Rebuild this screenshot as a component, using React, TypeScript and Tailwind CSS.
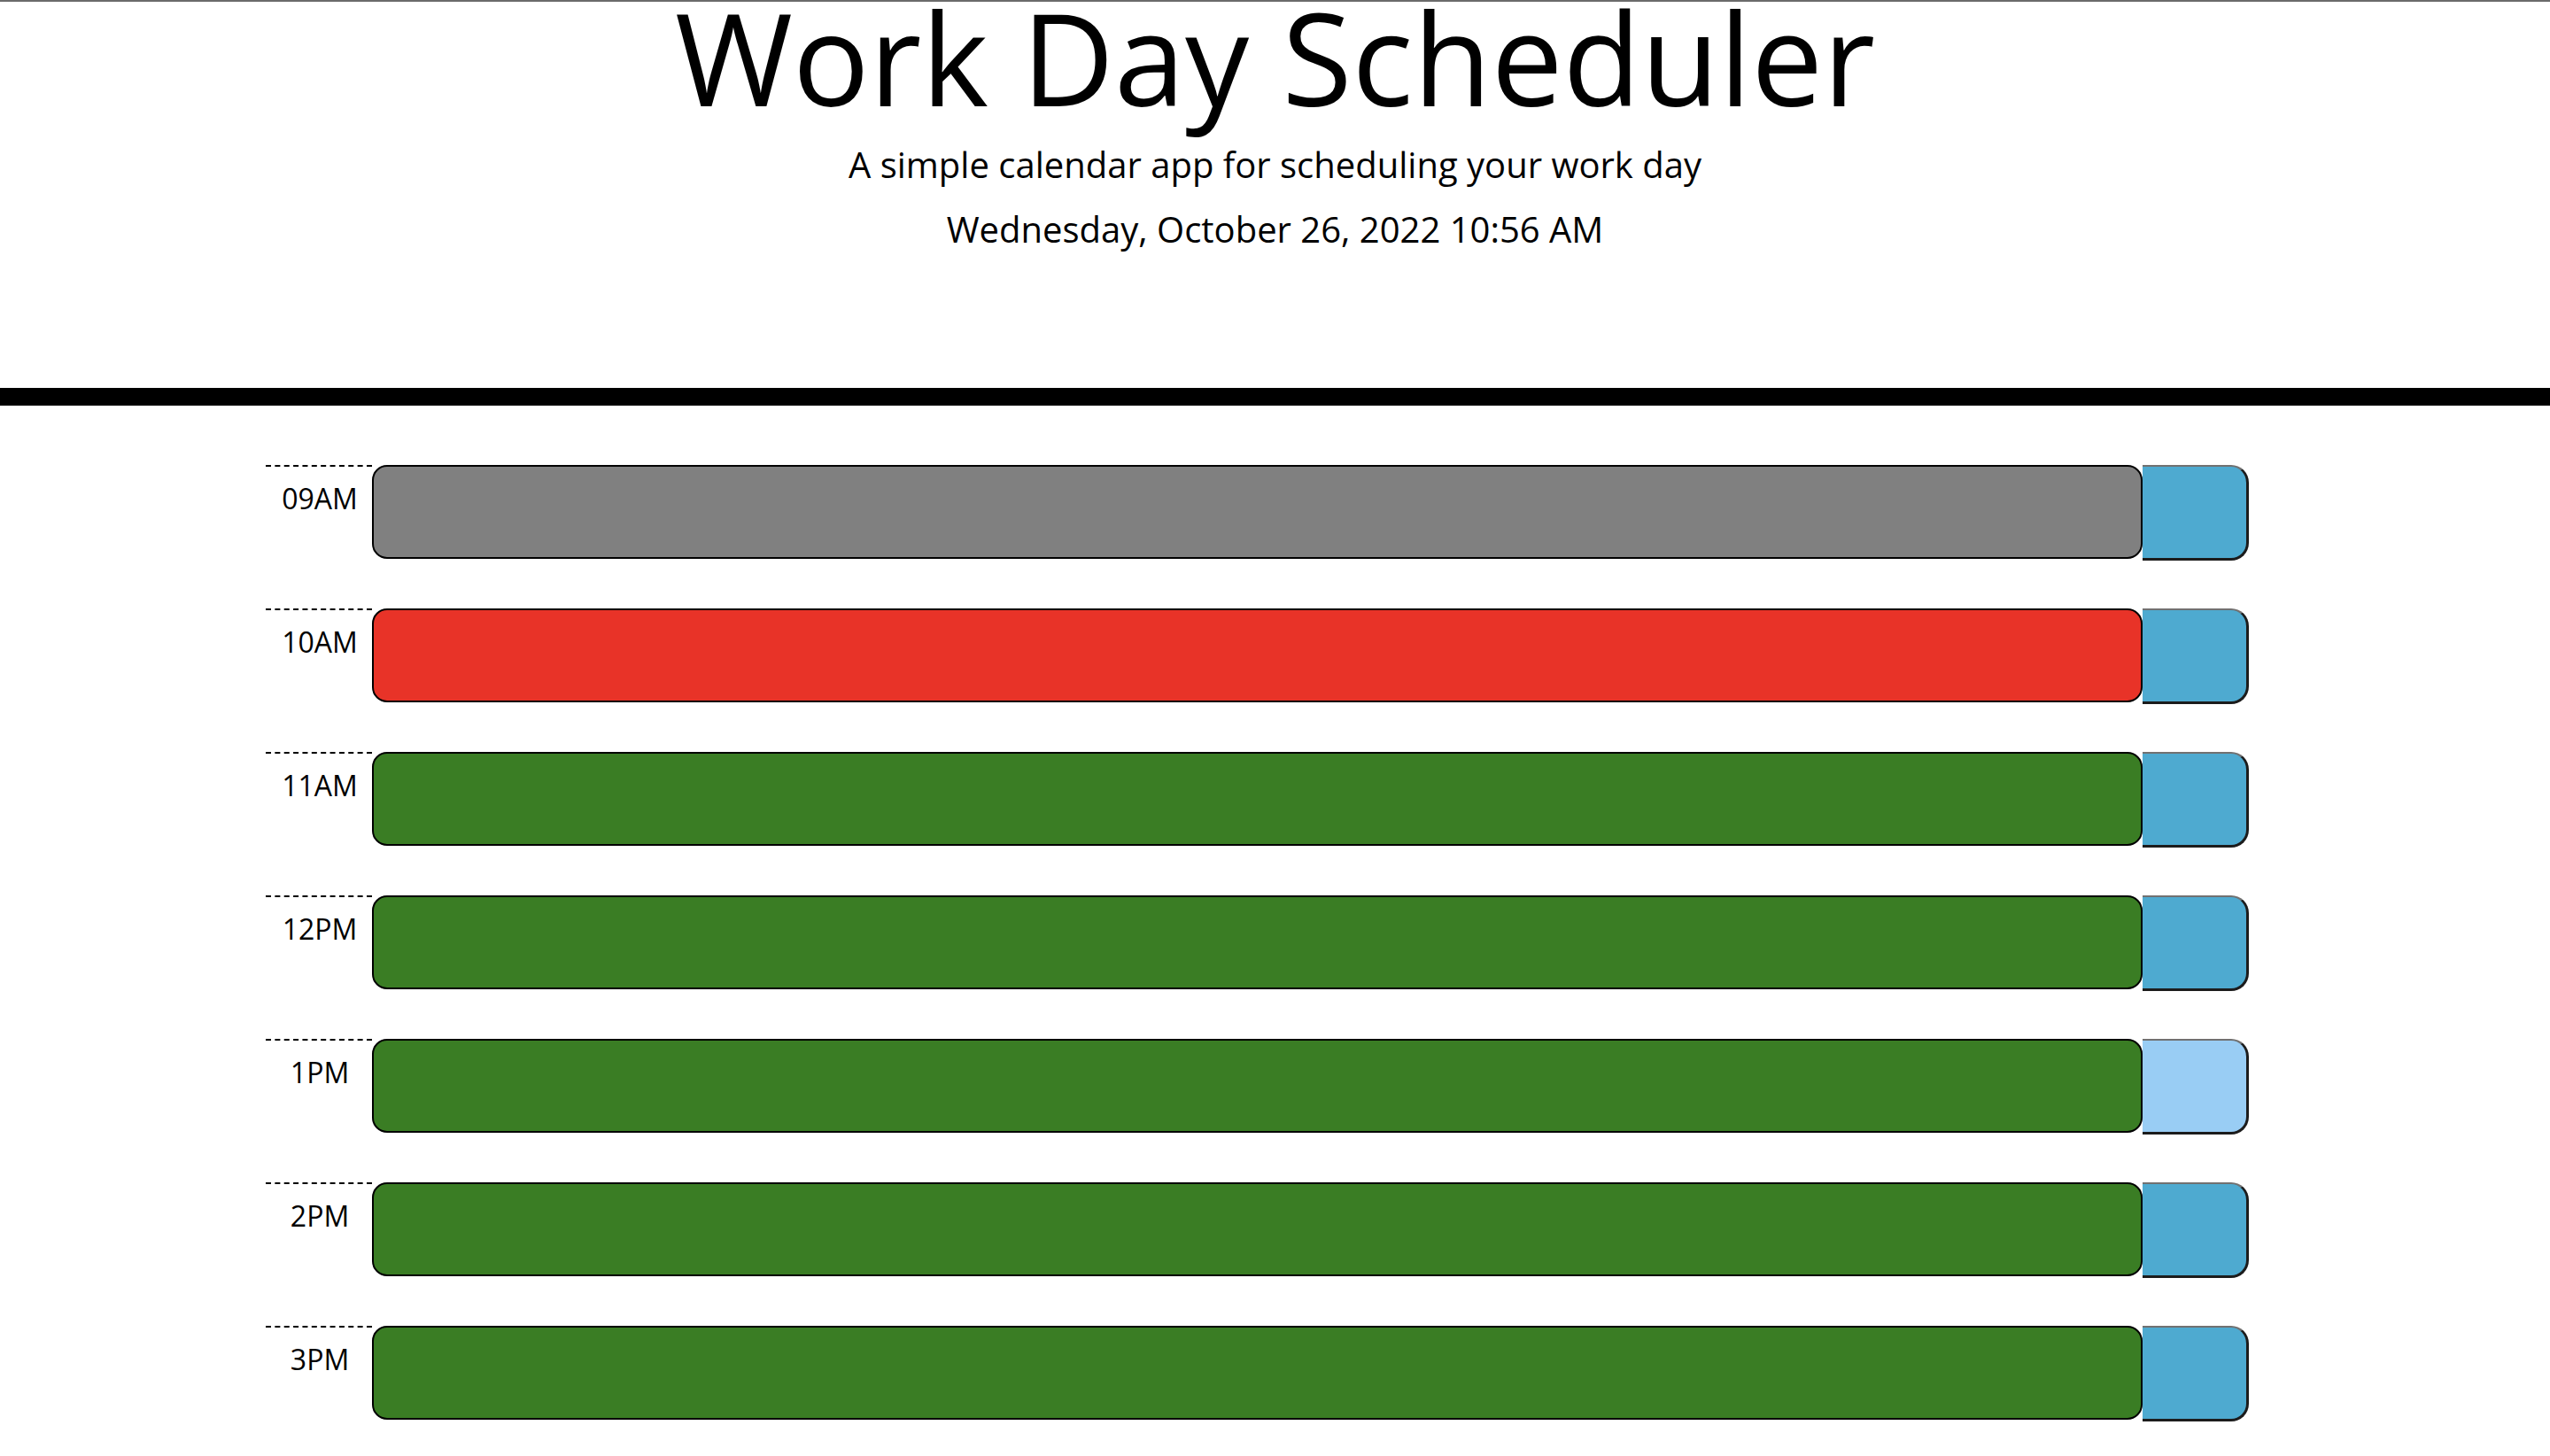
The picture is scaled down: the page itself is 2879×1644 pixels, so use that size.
import React from "react";

type Row = { label: string; bg: string; btn: string };

const rows: Row[] = [
  { label: "09AM", bg: "bg-[#808080]", btn: "bg-[#4eaad0]" },
  { label: "10AM", bg: "bg-[#e83328]", btn: "bg-[#4eaad0]" },
  { label: "11AM", bg: "bg-[#3a7d24]", btn: "bg-[#4eaad0]" },
  { label: "12PM", bg: "bg-[#3a7d24]", btn: "bg-[#4eaad0]" },
  { label: "1PM", bg: "bg-[#3a7d24]", btn: "bg-[#99cdf4]" },
  { label: "2PM", bg: "bg-[#3a7d24]", btn: "bg-[#4eaad0]" },
  { label: "3PM", bg: "bg-[#3a7d24]", btn: "bg-[#4eaad0]" },
];

export default function App() {
  return (
    <div
      className="w-full bg-white text-black border-t-2 border-[#6b6b6b]"
      style={{ fontFamily: '"Open Sans", "Liberation Sans", sans-serif' }}
    >
      <header className="flex flex-col items-center border-b-[20px] border-black pb-[159px]">
        <h1 className="mt-[12px] text-[144px] leading-[100px] font-normal whitespace-nowrap">
          Work Day Scheduler
        </h1>
        <p className="mt-[52px] text-[40px] leading-[40px]">
          A simple calendar app for scheduling your work day
        </p>
        <p className="mt-[33px] text-[40px] leading-[40px]">
          Wednesday, October 26, 2022 10:56 AM
        </p>
      </header>
      <main className="pl-[300px] pt-[67px] flex flex-col">
        {rows.map((r) => (
          <div key={r.label} className="flex items-start h-[108px] mb-[54px]">
            <div className="w-[120px] border-t-2 border-dashed border-black pt-[16px] pl-[2px] text-center text-[32px] leading-[40px]">
              {r.label}
            </div>
            <textarea
              className={`w-[1999px] h-[106px] ${r.bg} border-2 border-black rounded-[17px] resize-none outline-none`}
            />
            <button
              className={`w-[120px] h-[108px] ${r.btn} border-t-2 border-t-[#717171] border-r-[3px] border-r-[#1c1c1c] border-b-[3px] border-b-[#1c1c1c] rounded-r-[20px]`}
            />
          </div>
        ))}
      </main>
    </div>
  );
}
